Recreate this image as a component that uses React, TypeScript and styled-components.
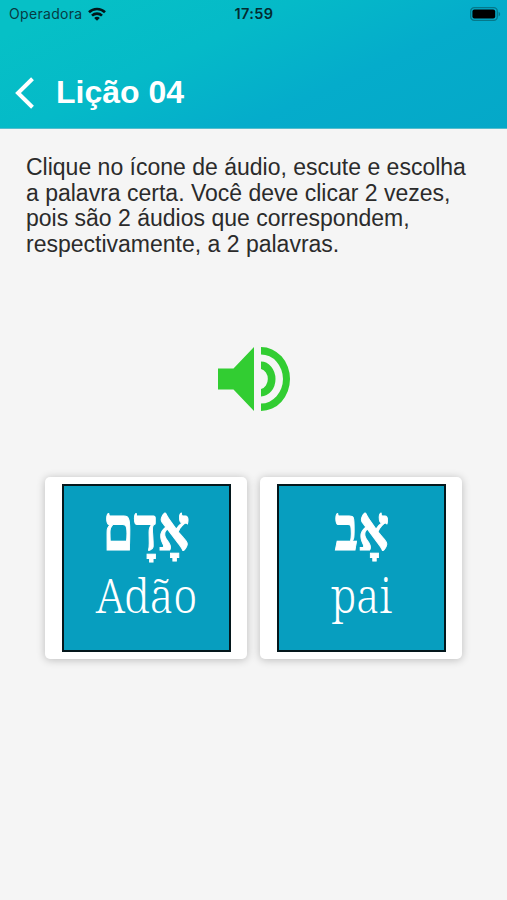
import React from 'react';
import styled, { createGlobalStyle } from 'styled-components';

const GlobalStyle = createGlobalStyle`
  * { box-sizing: border-box; }
  body { margin: 0; background: #f5f5f5; font-family: "Liberation Sans", Arial, sans-serif; }
`;

const Screen = styled.div`
  width: 507px;
  height: 900px;
  overflow: hidden;
  background: #f5f5f5;
`;

const Header = styled.header`
  height: 129px;
  background: linear-gradient(155deg, #06c0c6 10%, #05bac8 38%, #05accb 66%, #05a8c8 100%);
  border-bottom: 1px solid #55bdcd;
`;

const StatusBar = styled.div`
  height: 27px;
  padding: 0 6px 0 9px;
  display: grid;
  grid-template-columns: 1fr auto 1fr;
  align-items: center;
  font-family: Inter, sans-serif;
  font-size: 14px;
  color: #063b42;
`;

const Carrier = styled.div`
  display: flex;
  align-items: center;
  gap: 5px;
  letter-spacing: 0.32px;
`;

const Clock = styled.div`
  font-weight: 600;
  font-size: 14.5px;
  letter-spacing: 0.4px;
  margin-right: 2px;
  color: #042b30;
`;

const Battery = styled.svg`
  justify-self: end;
`;

const TitleRow = styled.div`
  display: flex;
  align-items: center;
  gap: 21px;
  height: 64px;
  margin-top: 34px;
  padding-left: 14px;
`;

const BackButton = styled.button`
  display: flex;
  padding: 0;
  border: 0;
  background: none;
`;

const Title = styled.h1`
  margin: 0 0 2px;
  font-size: 32px;
  line-height: 36px;
  color: #fff;
`;

const Instructions = styled.p`
  margin: 26px 0 0 26px;
  width: 460px;
  font-size: 23px;
  line-height: 25.7px;
  color: #2b2b2b;
`;

const AudioButton = styled.button`
  display: block;
  margin: 89px 0 0 218px;
  padding: 0;
  border: 0;
  background: none;
  svg { display: block; }
`;

const Cards = styled.div`
  display: flex;
  gap: 13px;
  margin: 66px 0 0 45.4px;
`;

const Card = styled.button`
  display: flex;
  justify-content: center;
  width: 202px;
  height: 182px;
  padding: 7px 0;
  border: 0;
  border-radius: 5px;
  background: #fff;
  box-shadow: 0 1px 8px rgba(0, 0, 0, 0.24);
`;

const Tile = styled.span`
  display: flex;
  flex-direction: column;
  align-items: center;
  width: 169px;
  height: 168px;
  border: 2px solid #04171c;
  background: #079ebf;
  color: #fff;
`;

const Hebrew = styled.span<{ $scale: number }>`
  margin-top: 11px;
  font: bold 62px/64px "Liberation Serif", serif;
  -webkit-text-stroke: 1.1px #fff;
  transform: scaleX(${(p) => p.$scale});
`;

const Meaning = styled.span<{ $scale: number }>`
  margin-top: 6px;
  font: 300 48px/56px "Noto Serif", "Liberation Serif", serif;
  transform: scaleX(${(p) => p.$scale});
`;

const words = [
  { hebrew: 'אָדָם', meaning: 'Adão', hebrewScale: 0.8, meaningScale: 0.9 },
  { hebrew: 'אָב', meaning: 'pai', hebrewScale: 0.78, meaningScale: 0.88 },
];

export default function App() {
  return (
    <Screen>
      <GlobalStyle />
      <Header>
        <StatusBar>
          <Carrier>
            Operadora
            <svg width="18" height="14" viewBox="0 0 18 14" fill="none" stroke="#02171a" strokeWidth="2.6">
              <path d="M1 5.2C5.4.9 12.6.9 17 5.2M4 8.6c2.8-2.7 7.2-2.7 10 0" />
              <path d="M9 13.7 6.2 10.9c1.6-1.4 4-1.4 5.6 0z" fill="#02171a" stroke="none" />
            </svg>
          </Carrier>
          <Clock>17:59</Clock>
          <Battery width="31" height="14" viewBox="0 0 31 14">
            <rect x="0.7" y="0.7" width="26.6" height="12.6" rx="3.6" fill="none" stroke="#05788a" strokeWidth="1.3" />
            <rect x="2.4" y="2.4" width="22.8" height="9.2" rx="2" fill="#000" />
            <path d="M28.6 4.7c2 .8 2 3.8 0 4.6z" fill="#05788a" />
          </Battery>
        </StatusBar>
        <TitleRow>
          <BackButton aria-label="Voltar">
            <svg width="21" height="32" viewBox="0 0 21 32" fill="none" stroke="#fff" strokeWidth="4">
              <path d="M18.5 1.8 4 16l14.5 14.2" />
            </svg>
          </BackButton>
          <Title>Lição 04</Title>
        </TitleRow>
      </Header>
      <Instructions>
        Clique no ícone de áudio, escute e escolha<br />
        a palavra certa. Você deve clicar 2 vezes,<br />
        pois são 2 áudios que correspondem,<br />
        respectivamente, a 2 palavras.
      </Instructions>
      <AudioButton aria-label="Ouvir">
        <svg width="72" height="64" viewBox="0 0 72 64" fill="#32cd32">
          <path d="M0 21.5h15.5L36 0v64L15.5 42.5H0z" />
          <path d="M43 0a29 32 0 0 1 0 64v-7.5a22 24.5 0 0 0 0-49z" />
          <path d="M43 14.5a14.5 17.5 0 0 1 0 35V42a8.5 10.2 0 0 0 0-20z" />
        </svg>
      </AudioButton>
      <Cards>
        {words.map((word) => (
          <Card key={word.meaning}>
            <Tile>
              <Hebrew lang="he" dir="rtl" $scale={word.hebrewScale}>{word.hebrew}</Hebrew>
              <Meaning $scale={word.meaningScale}>{word.meaning}</Meaning>
            </Tile>
          </Card>
        ))}
      </Cards>
    </Screen>
  );
}
